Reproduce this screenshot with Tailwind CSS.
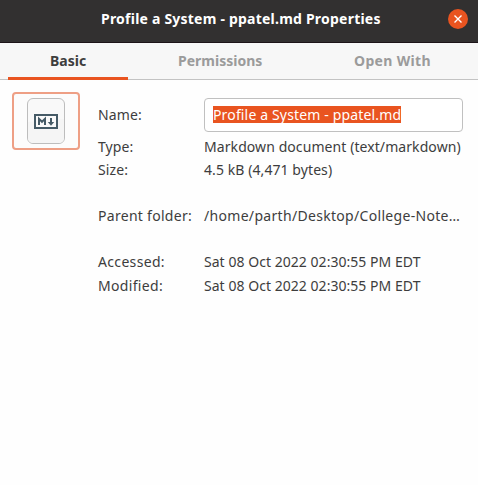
<!DOCTYPE html>
<html lang="en">
<head>
<meta charset="utf-8">
<title>Properties</title>
<script src="https://cdn.jsdelivr.net/npm/@tailwindcss/browser@4"></script>
</head>
<body class="w-[478px] h-[485px] overflow-hidden flex flex-col bg-[#fefefe] font-['Noto_Sans',sans-serif] text-[14px] leading-[23px] text-[#3d3d3d] whitespace-nowrap">
  <header class="h-[43px] shrink-0 grid grid-cols-[101px_1fr_30px] items-center bg-[#323030] border-b border-[#1c1419] text-white font-bold pb-1">
    <h1 class="col-start-2 pb-0.5"><span class="tracking-[0.22px]">Profile a System - ppatel.md Properties</span></h1>
    <button class="size-5 rounded-full bg-[#e95420] flex items-center justify-center" aria-label="Close">
      <svg class="size-2" viewBox="0 0 8 8" fill="none" stroke="#fff" stroke-width="1.4"><path d="M.5.5l7 7M7.5.5l-7 7"/></svg>
    </button>
  </header>
  <nav class="h-[37px] shrink-0 flex px-2 bg-[#f7f7f7] border-b border-[#c3c3c3] font-bold text-[#9b9b9b]">
    <div class="w-[120px] h-[37px] pt-[6px] pl-[42px] border-b-3 border-[#e95420] text-[#3d3d3d]"><span>Basic</span></div>
    <div class="w-[184px] pt-[6px] pl-[50px]"><span>Permissions</span></div>
    <div class="pt-[6px] pl-[42px]"><span class="tracking-[0.33px]">Open With</span></div>
  </nav>
  <main class="flex items-start pl-3 pt-3">
    <button class="w-[68px] h-[58px] mr-[18px] rounded-[4px] border-2 border-[#ee9f85] bg-[#fcfcfc] flex items-center justify-center" aria-label="File icon">
      <svg width="38" height="46" viewBox="0 0 38 46">
        <rect x=".5" y=".5" width="37" height="45" rx="5.5" fill="#f9f9f9" stroke="#bdbdbd"/>
        <path d="M1 24L37 21V40a5 5 0 0 1-5 5H6a5 5 0 0 1-5-5Z" fill="#f5f5f5"/>
        <rect x="8" y="17" width="22" height="13" fill="#fafafa" stroke="#465b67" stroke-width="2"/>
        <path d="M12 27v-6.2l3 3 3-3V27" fill="none" stroke="#465b67" stroke-width="2"/>
        <path d="M24 20v5" stroke="#465b67" stroke-width="2"/><path d="M20.8 24h6.4L24 27.7z" fill="#465b67"/>
      </svg>
    </button>
    <dl class="grid grid-cols-[106px_259px] grid-rows-[43px_23px_23px_23px_23px_23px_24px_23px]">
      <dt class="pt-[11px]"><span class="tracking-[0.15px]">Name:</span></dt>
      <dd class="h-[34px] mt-[6px] rounded-[4px] border border-[#c0c0c0] bg-white pl-2 flex items-center"><span class="h-[17px] leading-[17px] tracking-[0.15px] bg-[#e95420] text-white -mt-px">Profile a System - ppatel.md</span></dd>
      <dt><span class="tracking-[0.1px]">Type:</span></dt><dd><span class="tracking-[0.08px]">Markdown document (text/markdown)</span></dd>
      <dt><span class="tracking-[0.1px]">Size:</span></dt><dd><span class="tracking-[0.08px]">4.5 kB (4,471 bytes)</span></dd>
      <dt class="row-start-5"><span class="tracking-[0.29px]">Parent folder:</span></dt><dd class="row-start-5"><span class="tracking-[0.31px]">/home/parth/Desktop/College-Note…</span></dd>
      <dt class="row-start-7"><span class="tracking-[0.33px]">Accessed:</span></dt><dd class="row-start-7"><span class="tracking-[0.04px]">Sat 08 Oct 2022 02:30:55 PM EDT</span></dd>
      <dt class="row-start-8"><span class="tracking-[0.33px]">Modified:</span></dt><dd class="row-start-8"><span class="tracking-[0.04px]">Sat 08 Oct 2022 02:30:55 PM EDT</span></dd>
    </dl>
  </main>
</body>
</html>
